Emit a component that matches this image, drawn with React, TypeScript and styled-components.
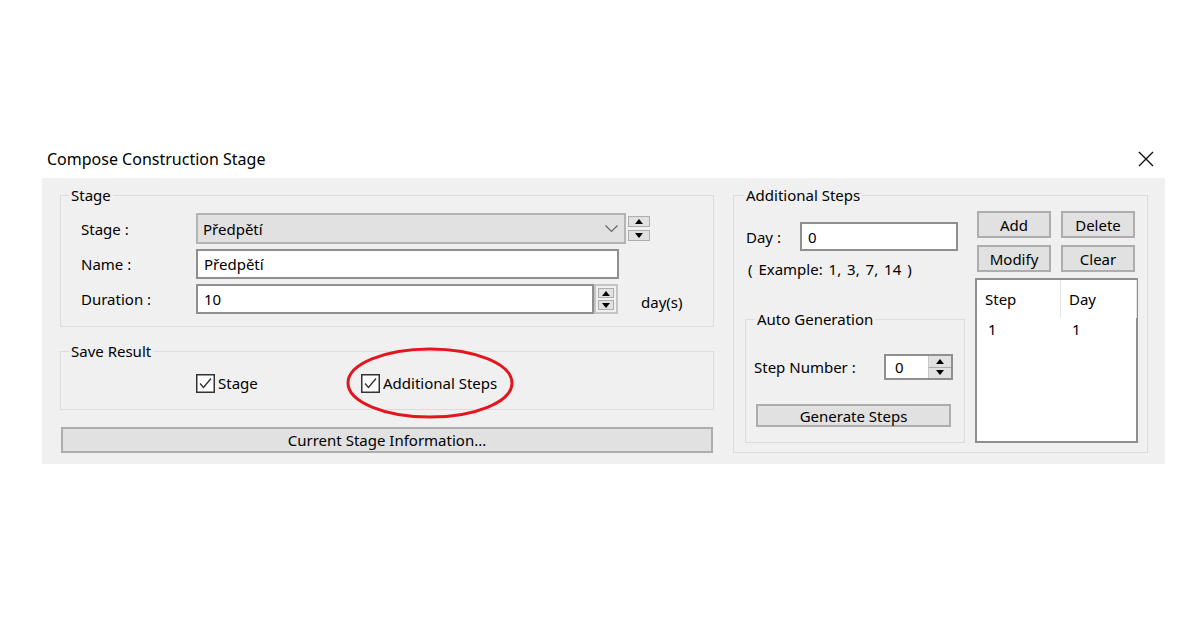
import styled, { createGlobalStyle } from "styled-components";

const GlobalStyle = createGlobalStyle`
  html, body {
    margin: 0;
    padding: 0;
    background: #ffffff;
  }
  body {
    font-family: "Noto Sans", "Open Sans", sans-serif;
    font-size: 15px;
    color: #000;
  }
`;

const Dialog = styled.div`
  width: 1123px;
  margin: 140px 0 0 42px;
`;

const TitleBar = styled.div`
  height: 38px;
  display: flex;
  align-items: center;
  justify-content: space-between;
  padding: 0 11px 0 5px;
  font-size: 16px;
`;

const Panel = styled.div`
  height: 286px;
  box-sizing: border-box;
  background: #f0f0f0;
  padding: 8px 17px 0 18px;
  display: flex;
  gap: 19px;
  align-items: flex-start;
`;

const Column = styled.div<{ $width: number }>`
  width: ${(p) => p.$width}px;
  display: flex;
  flex-direction: column;
`;

const Group = styled.fieldset<{ $height?: number; $top?: number }>`
  margin: ${(p) => p.$top ?? 0}px 0 0;
  padding: 0;
  border: 1px solid #dcdcdc;
  min-width: 0;
  box-sizing: border-box;
  ${(p) => (p.$height ? `height: ${p.$height}px;` : "")}
`;

const Legend = styled.legend<{ $indent?: number }>`
  padding: 0 2px;
  margin-left: ${(p) => p.$indent ?? 8}px;
  line-height: 18px;
`;

const StageBody = styled.div`
  padding: 9px 0 12px 20px;
  display: flex;
  flex-direction: column;
  gap: 5px;
`;

const Row = styled.div`
  display: flex;
  align-items: center;
`;

const Label = styled.span<{ $width: number }>`
  width: ${(p) => p.$width}px;
  flex: none;
`;

const Combo = styled.div`
  width: 430px;
  height: 31px;
  box-sizing: border-box;
  background: #e1e1e1;
  border: 2px solid #b4b4b4;
  display: flex;
  align-items: center;
  justify-content: space-between;
  padding: 0 6px 0 5px;
`;

const TextBox = styled.div<{ $width: number; $height?: number }>`
  width: ${(p) => p.$width}px;
  height: ${(p) => p.$height ?? 30}px;
  box-sizing: border-box;
  background: #fff;
  border: 2px solid #8f8f8f;
  display: flex;
  align-items: center;
  padding-left: 6px;
`;

const SpinPair = styled.div`
  margin-left: 2px;
  display: flex;
  flex-direction: column;
  gap: 3px;
`;

const SpinButton = styled.div`
  width: 22px;
  height: 11px;
  box-sizing: border-box;
  background: #e1e1e1;
  border: 1px solid #adadad;
  display: flex;
  align-items: center;
  justify-content: center;
`;

const Spinner = styled.div<{ $height: number }>`
  width: 24px;
  height: ${(p) => p.$height}px;
  box-sizing: border-box;
  border: 2px solid #c4c4c4;
  background: #f0f0f0;
  display: flex;
  flex-direction: column;
  justify-content: center;
  gap: 2px;
  padding: 2px;
`;

const SpinHalf = styled.div`
  flex: 1;
  background: #e1e1e1;
  border: 1px solid #adadad;
  display: flex;
  align-items: center;
  justify-content: center;
`;

const Unit = styled.span`
  margin-left: 23px;
  padding-top: 6px;
`;

const SaveBody = styled.div`
  padding: 13px 0 16px 135px;
  display: grid;
  grid-template-columns: 165px auto;
  align-items: center;
  height: 20px;
`;

const CheckItem = styled.label`
  position: relative;
  display: flex;
  align-items: center;
  gap: 3px;
  justify-self: start;
`;

const Highlight = styled.svg`
  position: absolute;
  left: -15px;
  top: -25px;
  overflow: visible;
  pointer-events: none;
`;

const WideButton = styled.div`
  margin: 17px 1px 0;
  height: 26px;
  box-sizing: border-box;
  background: #e1e1e1;
  border: 2px solid #adadad;
  display: flex;
  align-items: center;
  justify-content: center;
`;

const StepsBody = styled.div`
  padding: 7px 9px 0 11px;
  display: flex;
  gap: 10px;
`;

const DayRow = styled(Row)`
  margin: 11px 0 0 1px;
`;

const Example = styled.div`
  margin: 9px 0 0 3px;
  line-height: 18px;
  word-spacing: 2px;
`;

const AutoBody = styled.div`
  padding: 26px 0 0 8px;
  display: flex;
  flex-direction: column;
`;

const NumberBox = styled.div`
  width: 69px;
  height: 26px;
  box-sizing: border-box;
  border: 2px solid #8f8f8f;
  background: #fff;
  display: flex;
`;

const NumberValue = styled.span`
  flex: 1;
  padding-left: 9px;
  display: flex;
  align-items: center;
`;

const NumberSpin = styled.div`
  width: 22px;
  background: #e1e1e1;
  border-left: 1px solid #c8c8c8;
  display: flex;
  flex-direction: column;
`;

const NumberHalf = styled.div`
  flex: 1;
  display: flex;
  align-items: center;
  justify-content: center;
  & + & {
    border-top: 1px solid #adadad;
  }
`;

const Button = styled.div<{ $width: number; $height: number }>`
  width: ${(p) => p.$width}px;
  height: ${(p) => p.$height}px;
  box-sizing: border-box;
  background: #e1e1e1;
  border: 2px solid #adadad;
  display: flex;
  align-items: center;
  justify-content: center;
`;

const ButtonGrid = styled.div`
  padding-left: 2px;
  display: grid;
  grid-template-columns: 74px 74px;
  column-gap: 10px;
  row-gap: 7px;
`;

const ListBox = styled.div`
  margin-top: 6px;
  height: 165px;
  box-sizing: border-box;
  background: #fff;
  border: 2px solid #8f8f8f;
`;

const ListRow = styled.div<{ $header?: boolean }>`
  display: grid;
  grid-template-columns: 84px 76px;
  height: ${(p) => (p.$header ? 38 : 22)}px;
  align-items: center;
`;

const Cell = styled.div<{ $header?: boolean }>`
  height: 100%;
  display: flex;
  align-items: center;
  padding-left: ${(p) => (p.$header ? 8 : 11)}px;
  border-right: 1px solid ${(p) => (p.$header ? "#e5e5e5" : "transparent")};
`;

const Up = () => (
  <svg width="8" height="5" viewBox="0 0 8 5">
    <polygon points="4,0 8,5 0,5" fill="#000" />
  </svg>
);

const Down = () => (
  <svg width="8" height="5" viewBox="0 0 8 5">
    <polygon points="0,0 8,0 4,5" fill="#000" />
  </svg>
);

const Check = ({ children, circled }: { children: string; circled?: boolean }) => (
  <CheckItem>
    <svg width="19" height="19" viewBox="0 0 19 19">
      <rect x="0.75" y="0.75" width="17.5" height="17.5" fill="#fff" stroke="#333" strokeWidth="1.5" />
      <polyline points="4,9.5 7.5,13.5 15,4.5" fill="none" stroke="#333" strokeWidth="1.4" />
    </svg>
    {children}
    {circled ? (
      <Highlight width="168" height="72" viewBox="0 0 168 72">
        <ellipse cx="84" cy="35" rx="82" ry="34" fill="none" stroke="#e3161e" strokeWidth="3" />
      </Highlight>
    ) : null}
  </CheckItem>
);

function App() {
  return (
    <>
      <GlobalStyle />
      <Dialog>
        <TitleBar>
          <span>Compose Construction Stage</span>
          <svg width="16" height="16" viewBox="0 0 16 16">
            <path d="M1 1 L15 15 M15 1 L1 15" stroke="#111" strokeWidth="1.4" />
          </svg>
        </TitleBar>
        <Panel>
          <Column $width={654}>
            <Group>
              <Legend>Stage</Legend>
              <StageBody>
                <Row>
                  <Label $width={115}>Stage :</Label>
                  <Combo>
                    <span>Předpětí</span>
                    <svg width="13" height="8" viewBox="0 0 13 8">
                      <polyline points="0.5,0.5 6.5,6.5 12.5,0.5" fill="none" stroke="#666" strokeWidth="1.2" />
                    </svg>
                  </Combo>
                  <SpinPair>
                    <SpinButton>
                      <Up />
                    </SpinButton>
                    <SpinButton>
                      <Down />
                    </SpinButton>
                  </SpinPair>
                </Row>
                <Row>
                  <Label $width={115}>Name :</Label>
                  <TextBox $width={423}>Předpětí</TextBox>
                </Row>
                <Row>
                  <Label $width={115}>Duration :</Label>
                  <TextBox $width={398}>10</TextBox>
                  <Spinner $height={30}>
                    <SpinHalf>
                      <Up />
                    </SpinHalf>
                    <SpinHalf>
                      <Down />
                    </SpinHalf>
                  </Spinner>
                  <Unit>day(s)</Unit>
                </Row>
              </StageBody>
            </Group>
            <Group $top={15}>
              <Legend>Save Result</Legend>
              <SaveBody>
                <Check>Stage</Check>
                <Check circled>Additional Steps</Check>
              </SaveBody>
            </Group>
            <WideButton>Current Stage Information...</WideButton>
          </Column>
          <Column $width={415}>
            <Group $height={267}>
              <Legend $indent={10}>Additional Steps</Legend>
              <StepsBody>
                <Column $width={220}>
                  <DayRow>
                    <Label $width={54}>Day :</Label>
                    <TextBox $width={158} $height={29}>
                      0
                    </TextBox>
                  </DayRow>
                  <Example>( Example: 1, 3, 7, 14 )</Example>
                  <Group $top={32} $height={133}>
                    <Legend $indent={9}>Auto Generation</Legend>
                    <AutoBody>
                      <Row>
                        <Label $width={130}>Step Number :</Label>
                        <NumberBox>
                          <NumberValue>0</NumberValue>
                          <NumberSpin>
                            <NumberHalf>
                              <Up />
                            </NumberHalf>
                            <NumberHalf>
                              <Down />
                            </NumberHalf>
                          </NumberSpin>
                        </NumberBox>
                      </Row>
                      <Row style={{ marginTop: 24, marginLeft: 2 }}>
                        <Button $width={195} $height={23}>
                          Generate Steps
                        </Button>
                      </Row>
                    </AutoBody>
                  </Group>
                </Column>
                <Column $width={163}>
                  <ButtonGrid>
                    <Button $width={74} $height={27}>Add</Button>
                    <Button $width={74} $height={27}>Delete</Button>
                    <Button $width={74} $height={27}>Modify</Button>
                    <Button $width={74} $height={27}>Clear</Button>
                  </ButtonGrid>
                  <ListBox>
                    <ListRow $header>
                      <Cell $header>Step</Cell>
                      <Cell $header>Day</Cell>
                    </ListRow>
                    <ListRow>
                      <Cell>1</Cell>
                      <Cell>1</Cell>
                    </ListRow>
                  </ListBox>
                </Column>
              </StepsBody>
            </Group>
          </Column>
        </Panel>
      </Dialog>
    </>
  );
}

export default App;
